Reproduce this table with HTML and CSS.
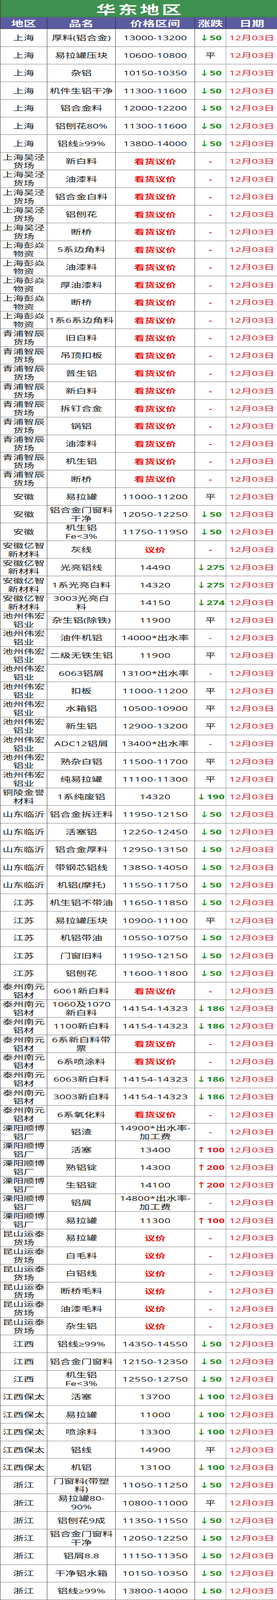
FILE: index.html
```html
<!DOCTYPE html>
<html lang="zh-CN">
<head>
<meta charset="utf-8">
<title>华东地区</title>
<link rel="stylesheet" href="styles.css">
</head>
<body>
<div class="frame">
<div class="sheet">
  <div class="title">华东地区</div>
  <div class="row head"><div>地区</div><div>品名</div><div>价格区间</div><div>涨跌</div><div>日期</div></div>

  <div class="row"><div>上海</div><div>厚料(铝合金)</div><div>13000-13200</div><div class="dn">↓50</div><div class="dt">12月03日</div></div>
  <div class="row"><div>上海</div><div>易拉罐压块</div><div>10600-10800</div><div>平</div><div class="dt">12月03日</div></div>
  <div class="row"><div>上海</div><div>杂铝</div><div>10150-10350</div><div class="dn">↓50</div><div class="dt">12月03日</div></div>
  <div class="row"><div>上海</div><div>机件生铝干净</div><div>11300-11600</div><div class="dn">↓50</div><div class="dt">12月03日</div></div>
  <div class="row"><div>上海</div><div>铝合金料</div><div>12000-12200</div><div class="dn">↓50</div><div class="dt">12月03日</div></div>
  <div class="row"><div>上海</div><div>铝刨花80%</div><div>11300-11600</div><div class="dn">↓50</div><div class="dt">12月03日</div></div>
  <div class="row"><div>上海</div><div>铝线≥99%</div><div>13800-14000</div><div class="dn">↓50</div><div class="dt">12月03日</div></div>
  <div class="row"><div>上海吴泾货场</div><div>新白料</div><div class="ask">看货议价</div><div class="dr">-</div><div class="dt">12月03日</div></div>
  <div class="row"><div>上海吴泾货场</div><div>油漆料</div><div class="ask">看货议价</div><div class="dr">-</div><div class="dt">12月03日</div></div>
  <div class="row"><div>上海吴泾货场</div><div>铝合金白料</div><div class="ask">看货议价</div><div class="dr">-</div><div class="dt">12月03日</div></div>
  <div class="row"><div>上海吴泾货场</div><div>铝刨花</div><div class="ask">看货议价</div><div class="dr">-</div><div class="dt">12月03日</div></div>
  <div class="row"><div>上海吴泾货场</div><div>断桥</div><div class="ask">看货议价</div><div class="dr">-</div><div class="dt">12月03日</div></div>
  <div class="row"><div>上海彭焱物资</div><div>5系边角料</div><div class="ask">看货议价</div><div class="dr">-</div><div class="dt">12月03日</div></div>
  <div class="row"><div>上海彭焱物资</div><div>油漆料</div><div class="ask">看货议价</div><div class="dr">-</div><div class="dt">12月03日</div></div>
  <div class="row"><div>上海彭焱物资</div><div>厚油漆料</div><div class="ask">看货议价</div><div class="dr">-</div><div class="dt">12月03日</div></div>
  <div class="row"><div>上海彭焱物资</div><div>断桥</div><div class="ask">看货议价</div><div class="dr">-</div><div class="dt">12月03日</div></div>
  <div class="row"><div>上海彭焱物资</div><div>1系6系边角料</div><div class="ask">看货议价</div><div class="dr">-</div><div class="dt">12月03日</div></div>
  <div class="row"><div>青浦智辰货场</div><div>旧白料</div><div class="ask">看货议价</div><div class="dr">-</div><div class="dt">12月03日</div></div>
  <div class="row"><div>青浦智辰货场</div><div>吊顶扣板</div><div class="ask">看货议价</div><div class="dr">-</div><div class="dt">12月03日</div></div>
  <div class="row"><div>青浦智辰货场</div><div>普生铝</div><div class="ask">看货议价</div><div class="dr">-</div><div class="dt">12月03日</div></div>
  <div class="row"><div>青浦智辰货场</div><div>新白料</div><div class="ask">看货议价</div><div class="dr">-</div><div class="dt">12月03日</div></div>
  <div class="row"><div>青浦智辰货场</div><div>拆钉合金</div><div class="ask">看货议价</div><div class="dr">-</div><div class="dt">12月03日</div></div>
  <div class="row"><div>青浦智辰货场</div><div>锅铝</div><div class="ask">看货议价</div><div class="dr">-</div><div class="dt">12月03日</div></div>
  <div class="row"><div>青浦智辰货场</div><div>油漆料</div><div class="ask">看货议价</div><div class="dr">-</div><div class="dt">12月03日</div></div>
  <div class="row"><div>青浦智辰货场</div><div>机生铝</div><div class="ask">看货议价</div><div class="dr">-</div><div class="dt">12月03日</div></div>
  <div class="row"><div>青浦智辰货场</div><div>断桥</div><div class="ask">看货议价</div><div class="dr">-</div><div class="dt">12月03日</div></div>
  <div class="row"><div>安徽</div><div>易拉罐</div><div class="num">11000-11200</div><div>平</div><div class="dt">12月03日</div></div>
  <div class="row"><div>安徽</div><div>铝合金门窗料干净</div><div class="num">12050-12250</div><div class="dn">↓50</div><div class="dt">12月03日</div></div>
  <div class="row"><div>安徽</div><div>机生铝<br>Fe&lt;3%</div><div class="num">11750-11950</div><div class="dn">↓50</div><div class="dt">12月03日</div></div>
  <div class="row"><div>安徽亿智新材料</div><div>灰线</div><div class="ask">议价</div><div class="dr">-</div><div class="dt">12月03日</div></div>
  <div class="row"><div>安徽亿智新材料</div><div>光亮铝线</div><div class="num">14490</div><div class="dn">↓275</div><div class="dt">12月03日</div></div>
  <div class="row"><div>安徽亿智新材料</div><div>1系光亮白料</div><div class="num">14320</div><div class="dn">↓275</div><div class="dt">12月03日</div></div>
  <div class="row"><div>安徽亿智新材料</div><div>3003光亮白料</div><div class="num">14150</div><div class="dn">↓274</div><div class="dt">12月03日</div></div>
  <div class="row"><div>池州伟宏铝业</div><div>杂生铝(除铁)</div><div class="num">11900</div><div>平</div><div class="dt">12月03日</div></div>
  <div class="row"><div>池州伟宏铝业</div><div>油件机铝</div><div>14000*出水率</div><div>-</div><div class="dt">12月03日</div></div>
  <div class="row"><div>池州伟宏铝业</div><div>二级无铁生铝</div><div class="num">11900</div><div>平</div><div class="dt">12月03日</div></div>
  <div class="row"><div>池州伟宏铝业</div><div>6063铝屑</div><div>13100*出水率</div><div>-</div><div class="dt">12月03日</div></div>
  <div class="row"><div>池州伟宏铝业</div><div>扣板</div><div class="num">11000-11200</div><div>平</div><div class="dt">12月03日</div></div>
  <div class="row"><div>池州伟宏铝业</div><div>水箱铝</div><div class="num">10500-10900</div><div>平</div><div class="dt">12月03日</div></div>
  <div class="row"><div>池州伟宏铝业</div><div>新生铝</div><div class="num">12900-13200</div><div>平</div><div class="dt">12月03日</div></div>
  <div class="row"><div>池州伟宏铝业</div><div>ADC12铝屑</div><div>13400*出水率</div><div>-</div><div class="dt">12月03日</div></div>
  <div class="row"><div>池州伟宏铝业</div><div>熟杂白铝</div><div class="num">11500-11700</div><div>平</div><div class="dt">12月03日</div></div>
  <div class="row"><div>池州伟宏铝业</div><div>纯易拉罐</div><div class="num">11100-11300</div><div>平</div><div class="dt">12月03日</div></div>
  <div class="row"><div>铜陵金誉材料</div><div>1系纯废铝</div><div class="num">14320</div><div class="dn">↓190</div><div class="dt">12月03日</div></div>
  <div class="row"><div>山东临沂</div><div>铝合金拆迁料</div><div class="num">11950-12150</div><div class="dn">↓50</div><div class="dt">12月03日</div></div>
  <div class="row"><div>山东临沂</div><div>活塞铝</div><div class="num">12250-12450</div><div class="dn">↓50</div><div class="dt">12月03日</div></div>
  <div class="row"><div>山东临沂</div><div>铝合金厚料</div><div class="num">12950-13150</div><div class="dn">↓50</div><div class="dt">12月03日</div></div>
  <div class="row"><div>山东临沂</div><div>带钢芯铝线</div><div class="num">13850-14050</div><div class="dn">↓50</div><div class="dt">12月03日</div></div>
  <div class="row"><div>山东临沂</div><div>机铝(摩托)</div><div class="num">11550-11750</div><div class="dn">↓50</div><div class="dt">12月03日</div></div>
  <div class="row"><div>江苏</div><div>机生铝不带油</div><div class="num">11650-11850</div><div class="dn">↓50</div><div class="dt">12月03日</div></div>
  <div class="row"><div>江苏</div><div>易拉罐压块</div><div class="num">10900-11100</div><div>平</div><div class="dt">12月03日</div></div>
  <div class="row"><div>江苏</div><div>机铝带油</div><div class="num">10550-10750</div><div class="dn">↓50</div><div class="dt">12月03日</div></div>
  <div class="row"><div>江苏</div><div>门窗旧料</div><div class="num">11950-12150</div><div class="dn">↓50</div><div class="dt">12月03日</div></div>
  <div class="row"><div>江苏</div><div>铝刨花</div><div class="num">11600-11800</div><div class="dn">↓50</div><div class="dt">12月03日</div></div>
  <div class="row"><div>泰州南元铝材</div><div>6061新白料</div><div class="ask">看货议价</div><div class="dr">-</div><div class="dt">12月03日</div></div>
  <div class="row"><div>泰州南元铝材</div><div>1060及1070新白料</div><div class="num">14154-14323</div><div class="dn">↓186</div><div class="dt">12月03日</div></div>
  <div class="row"><div>泰州南元铝材</div><div>1100新白料</div><div class="num">14154-14323</div><div class="dn">↓186</div><div class="dt">12月03日</div></div>
  <div class="row"><div>泰州南元铝材</div><div>6系新白料带票</div><div class="ask">看货议价</div><div class="dr">-</div><div class="dt">12月03日</div></div>
  <div class="row"><div>泰州南元铝材</div><div>6系喷涂料</div><div class="ask">看货议价</div><div class="dr">-</div><div class="dt">12月03日</div></div>
  <div class="row"><div>泰州南元铝材</div><div>6063新白料</div><div class="num">14154-14323</div><div class="dn">↓186</div><div class="dt">12月03日</div></div>
  <div class="row"><div>泰州南元铝材</div><div>3003新白料</div><div class="num">14154-14323</div><div class="dn">↓186</div><div class="dt">12月03日</div></div>
  <div class="row"><div>泰州南元铝材</div><div>6系氧化料</div><div class="ask">看货议价</div><div class="dr">-</div><div class="dt">12月03日</div></div>
  <div class="row"><div>溧阳顺博铝厂</div><div>铝渣</div><div>14900*出水率-加工费</div><div>-</div><div class="dt">12月03日</div></div>
  <div class="row"><div>溧阳顺博铝厂</div><div>活塞</div><div class="num">13400</div><div class="up">↑100</div><div class="dt">12月03日</div></div>
  <div class="row"><div>溧阳顺博铝厂</div><div>熟铝锭</div><div class="num">14300</div><div class="up">↑200</div><div class="dt">12月03日</div></div>
  <div class="row"><div>溧阳顺博铝厂</div><div>生铝锭</div><div class="num">14100</div><div class="up">↑200</div><div class="dt">12月03日</div></div>
  <div class="row"><div>溧阳顺博铝厂</div><div>铝屑</div><div>14800*出水率-加工费</div><div>-</div><div class="dt">12月03日</div></div>
  <div class="row"><div>溧阳顺博铝厂</div><div>易拉罐</div><div class="num">11300</div><div class="up">↑100</div><div class="dt">12月03日</div></div>
  <div class="row"><div>昆山运泰货场</div><div>易拉罐</div><div class="ask">议价</div><div class="dr">-</div><div class="dt">12月03日</div></div>
  <div class="row"><div>昆山运泰货场</div><div>白毛料</div><div class="ask">议价</div><div class="dr">-</div><div class="dt">12月03日</div></div>
  <div class="row"><div>昆山运泰货场</div><div>白铝线</div><div class="ask">议价</div><div class="dr">-</div><div class="dt">12月03日</div></div>
  <div class="row"><div>昆山运泰货场</div><div>断桥毛料</div><div class="ask">议价</div><div class="dr">-</div><div class="dt">12月03日</div></div>
  <div class="row"><div>昆山运泰货场</div><div>油漆毛料</div><div class="ask">议价</div><div class="dr">-</div><div class="dt">12月03日</div></div>
  <div class="row"><div>昆山运泰货场</div><div>杂生铝</div><div class="ask">议价</div><div class="dr">-</div><div class="dt">12月03日</div></div>
  <div class="row"><div>江西</div><div>铝线≥99%</div><div class="num">14350-14550</div><div class="dn">↓50</div><div class="dt">12月03日</div></div>
  <div class="row"><div>江西</div><div>铝合金门窗料</div><div class="num">12150-12350</div><div class="dn">↓50</div><div class="dt">12月03日</div></div>
  <div class="row"><div>江西</div><div>机生铝<br>Fe&lt;3%</div><div class="num">12550-12750</div><div class="dn">↓50</div><div class="dt">12月03日</div></div>
  <div class="row"><div>江西保太</div><div>活塞</div><div class="num">13700</div><div class="dn">↓100</div><div class="dt">12月03日</div></div>
  <div class="row"><div>江西保太</div><div>易拉罐</div><div class="num">11000</div><div class="dn">↓100</div><div class="dt">12月03日</div></div>
  <div class="row"><div>江西保太</div><div>喷涂料</div><div class="num">13300</div><div class="dn">↓100</div><div class="dt">12月03日</div></div>
  <div class="row"><div>江西保太</div><div>铝线</div><div class="num">14900</div><div>平</div><div class="dt">12月03日</div></div>
  <div class="row"><div>江西保太</div><div>机铝</div><div class="num">13100</div><div class="dn">↓100</div><div class="dt">12月03日</div></div>
  <div class="row"><div>浙江</div><div>门窗料(带塑料)</div><div class="num">11050-11250</div><div class="dn">↓50</div><div class="dt">12月03日</div></div>
  <div class="row"><div>浙江</div><div>易拉罐80-90%</div><div class="num">10800-11000</div><div>平</div><div class="dt">12月03日</div></div>
  <div class="row"><div>浙江</div><div>铝刨花9成</div><div class="num">11350-11550</div><div class="dn">↓50</div><div class="dt">12月03日</div></div>
  <div class="row"><div>浙江</div><div>铝合金门窗料干净</div><div class="num">12050-12250</div><div class="dn">↓50</div><div class="dt">12月03日</div></div>
  <div class="row"><div>浙江</div><div>铝屑8.8</div><div class="num">11150-11350</div><div class="dn">↓50</div><div class="dt">12月03日</div></div>
  <div class="row"><div>浙江</div><div>干净铝水箱</div><div class="num">10150-10350</div><div class="dn">↓50</div><div class="dt">12月03日</div></div>
  <div class="row"><div>浙江</div><div>铝线≥99%</div><div class="num">13800-14000</div><div class="dn">↓50</div><div class="dt">12月03日</div></div>
</div>
</div>
</body>
</html>
```

FILE: styles.css
```css
* { box-sizing: border-box; }
html, body { margin: 0; padding: 0; background: #ffffff; }
body {
  font-family: "Open Sans", "Noto Sans CJK SC", "Liberation Sans", sans-serif;
  color: #161616;
}
/* the capture window is 4096px tall: the 6576px sheet is drawn squeezed to fit it */
.frame {
  width: 709px;
  height: 4096px;
  overflow: hidden;
}
.sheet {
  width: 709px;
  height: 6576px;
  display: flex;
  flex-direction: column;
  transform: scaleY(0.62287);
  transform-origin: 0 0;
}
.title {
  height: 71px;
  flex: none;
  background: #3e9150;
  color: #ffffff;
  font-family: "Noto Sans CJK SC", sans-serif;
  font-weight: 700;
  font-size: 50px;
  line-height: normal;
  text-align: center;
  letter-spacing: 6px;
  padding-left: 6px;
  border-bottom: 1px solid #1f1f1f;
  border-left: 1px solid #1f1f1f;
}
.row {
  flex: none;
  display: grid;
  grid-template-columns: 120px 175px 203px 80px 131px;
  height: 72.55px;
  border-bottom: 1px solid #2a2a2a;
  border-left: 1px solid #2a2a2a;
}
.row > div {
  display: flex;
  align-items: center;
  justify-content: center;
  text-align: center;
  font-size: 27px;
  line-height: 35px;
  padding: 0 4px;
  border-right: 1px solid #2a2a2a;
}
.row > div:nth-child(4) { border-right-color: #8a8a8a; padding: 0; }
.row > div:nth-child(1) { padding: 0 2px; }
.row > div:nth-child(5) { border-right: none; padding: 0; }
.row > .num { letter-spacing: 0.5px; }
.row.head {
  height: 48px;
  background: #595c9e;
  border-bottom: 1px solid #1f1f1f;
}
.row.head > div {
  color: #ffffff;
  font-family: "Noto Sans CJK SC", sans-serif;
  font-weight: 700;
  font-size: 32px;
  line-height: 46px;
  border-right-color: #1f1f1f;
}
.dt { color: #d5232c; }
.dn { color: #1f8a1f; font-weight: 700; }
.up { color: #e01d1d; font-weight: 700; }
.dr { color: #e3161e; font-weight: 700; }
.ask {
  color: #ee1111;
  font-weight: 700;
  font-family: "Noto Sans CJK SC", sans-serif;
}
```
